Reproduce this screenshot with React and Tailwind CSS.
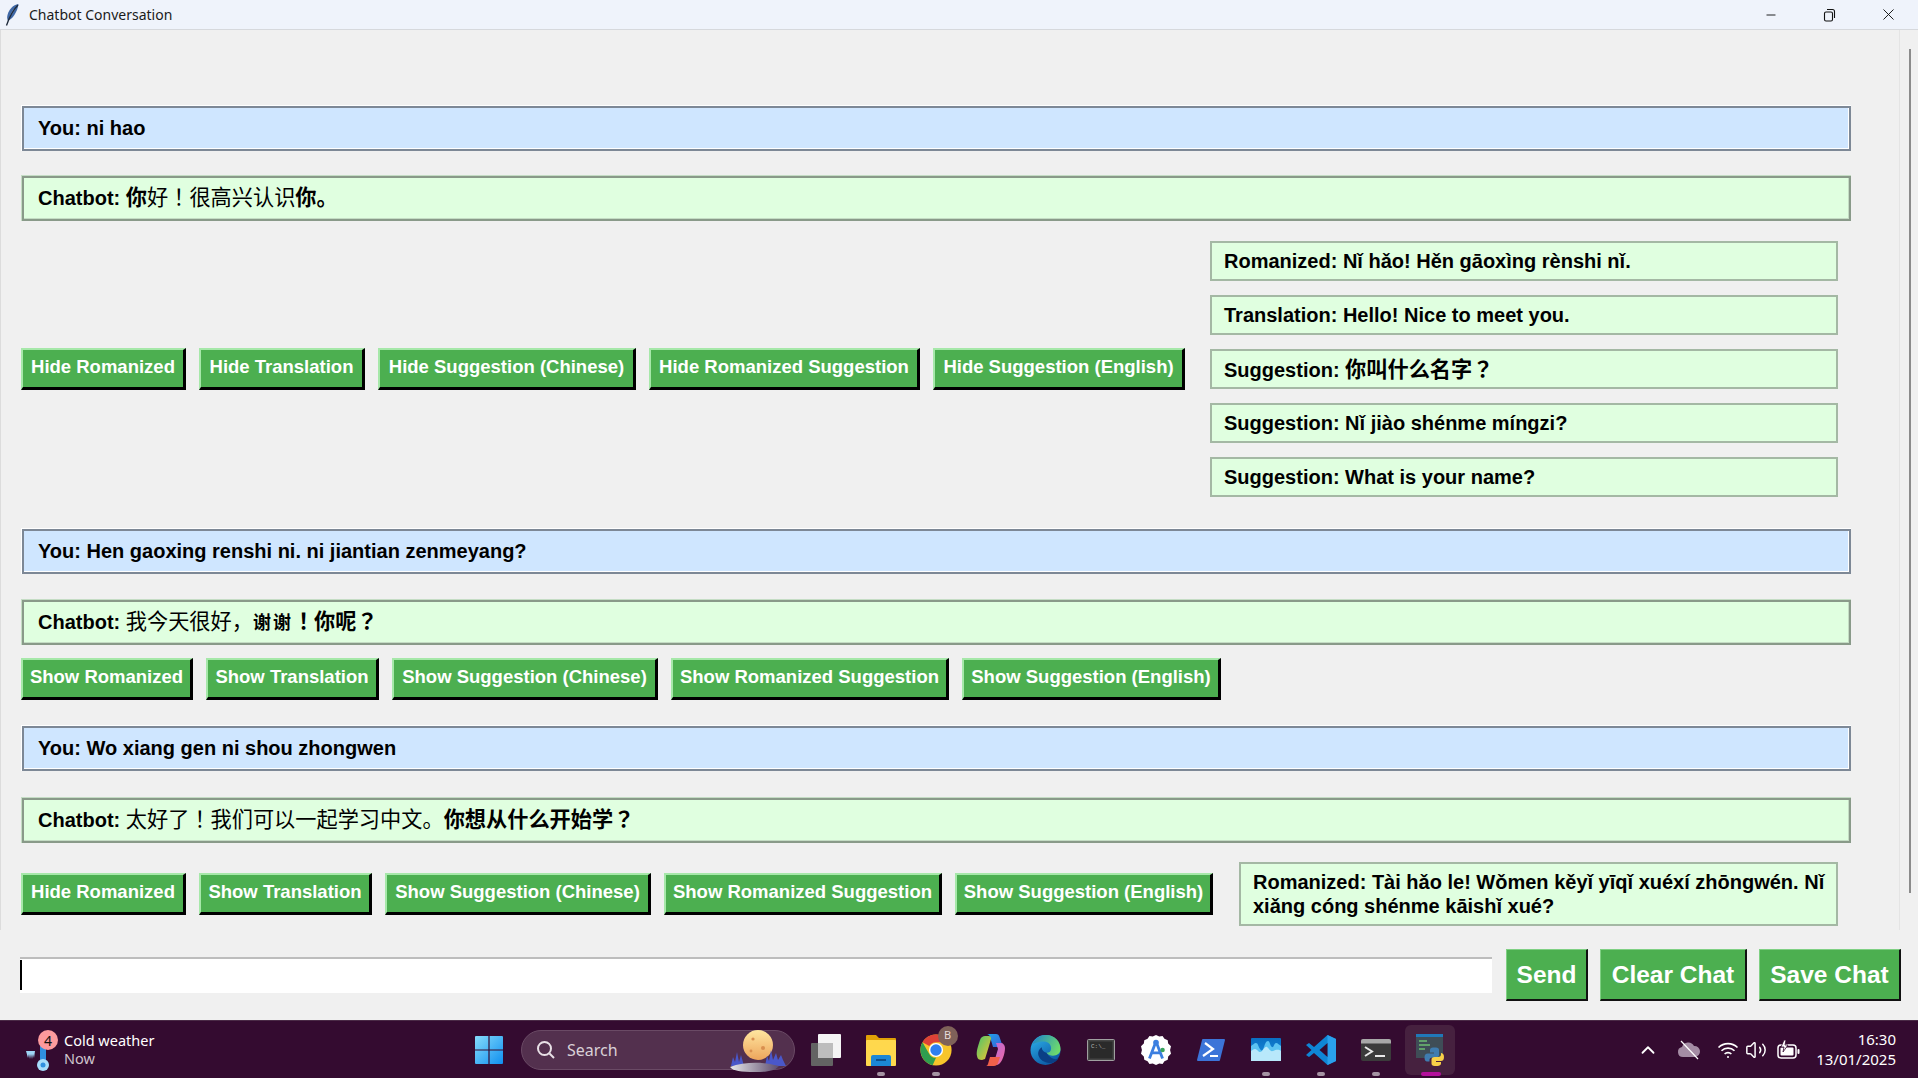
import React from 'react';
import { Minus, X, ChevronUp, Volume2 } from 'lucide-react';

const FONT = "font-['Liberation_Sans','Noto_Sans_CJK_SC',sans-serif]";

const Bubble = ({ kind, className = '', children }) => (
  <div
    className={`h-[46px] w-[1830px] flex items-center pl-[17px] text-[20px] leading-none font-bold text-black ${
      kind === 'you'
        ? 'bg-[#cfe6ff] shadow-[inset_1px_1px_0_#fff,inset_-2px_-2px_0_#7d8896,inset_3px_3px_0_#7d8896,inset_-3px_-3px_0_#fff]'
        : 'pb-[2px] bg-[#e0ffe0] shadow-[inset_1px_1px_0_#c4dcc4,inset_-2px_-2px_0_#899a89,inset_3px_3px_0_#899a89,inset_-3px_-3px_0_#c4dcc4]'
    } ${className}`}
  >
    {children}
  </div>
);

// chinese runs are a little larger than the latin text around them
const Zh = ({ thin, className = '', children }) => (
  <span className={`text-[21.2px] ${thin ? 'font-normal' : ''} ${className}`}>{children}</span>
);
const Punct = ({ children }) => (
  <span className="font-['Noto_Sans_CJK_TC',sans-serif]">{children}</span>
);

const ToggleButton = ({ label, width }) => (
  <button
    style={{ width }}
    className="h-[42px] shrink-0 pb-[2px] bg-[#4caf50] text-white font-bold text-[18.5px] leading-none border-t-2 border-l-2 border-r-[3px] border-b-[3px] border-t-[#a6e8a9] border-l-[#a6e8a9] border-r-black border-b-black"
  >
    {label}
  </button>
);

const ButtonRow = ({ buttons }) => (
  <div className="flex gap-[13px]">
    {buttons.map(([label, width]) => (
      <ToggleButton key={label} label={label} width={width} />
    ))}
  </div>
);

const InfoBox = ({ className = '', children }) => (
  <div className={`bg-[#e0ffe0] border-2 border-[#a4b8a4] flex items-center pl-[12px] pr-2 text-[20px] font-bold text-black ${className}`}>
    {children}
  </div>
);

const ActionButton = ({ label, width }) => (
  <button
    style={{ width }}
    className="h-[52px] shrink-0 pt-[2px] bg-[#4caf50] text-white font-bold text-[24.5px] leading-none border-t border-l border-r-2 border-b-2 border-t-[#7fd083] border-l-[#7fd083] border-r-[#111] border-b-[#111]"
  >
    {label}
  </button>
);

const Feather = () => (
  <svg width="16" height="24" viewBox="0 0 16 24">
    <path d="M14.5 1C9 2 5 6 3.5 12c-.6 2.4-.4 4 .3 5.5C8 17 13.5 9 14.5 1z" fill="#3f68a6" />
    <path d="M12 4C9 6.5 7 9 6 13c2-2 5-5 6-9z" fill="#7fa3d6" />
    <path d="M14 2C10 6 6 12 2.5 22.5" stroke="#1f2a3a" strokeWidth="1.3" fill="none" />
  </svg>
);

const RestoreIcon = () => (
  <svg width="14" height="14" viewBox="0 0 14 14" fill="none" stroke="#111" strokeWidth="1.1">
    <rect x="1.5" y="4" width="8" height="9" rx="1.5" />
    <path d="M4 1.5h5.5a2 2 0 0 1 2 2V10" />
  </svg>
);

const Weather = () => (
  <div className="relative w-[64px] h-full shrink-0">
    <svg className="absolute left-[25px] top-[17px]" width="26" height="34" viewBox="0 0 26 34">
      <path d="M1 13h9l-1 7-1-4-1 5-1-5-1 5-1-5-1 4z" fill="#9fd4f5" />
      <rect x="15" y="8" width="6" height="18" fill="#2f8fe0" />
      <circle cx="18" cy="27" r="6" fill="#a6dcfb" />
      <circle cx="18" cy="27" r="2.5" fill="#2f8fe0" />
    </svg>
    <div className="absolute left-[38px] top-[9px] w-[20px] h-[20px] rounded-full bg-[#fd9a9d] text-[#111] text-[14px] flex items-center justify-center font-['Noto_Sans']">
      4
    </div>
  </div>
);

const WinLogo = () => (
  <svg width="30" height="30" viewBox="0 0 30 30">
    <defs>
      <linearGradient id="win" x1="0" y1="0" x2="1" y2="1">
        <stop offset="0" stopColor="#86dcfb" />
        <stop offset="1" stopColor="#0f8ff0" />
      </linearGradient>
    </defs>
    <path d="M1 2a1 1 0 0 1 1-1h12.4v13.4H1zM15.6 1H28a1 1 0 0 1 1 1v12.4H15.6zM1 15.6h13.4V29H2a1 1 0 0 1-1-1zM15.6 15.6H29V28a1 1 0 0 1-1 1H15.6z" fill="url(#win)" />
  </svg>
);

const MoonScene = () => (
  <svg width="64" height="44" viewBox="0 0 64 44">
    <defs>
      <linearGradient id="moon" x1="0" y1="0" x2="0" y2="1">
        <stop offset="0" stopColor="#ffe6a0" />
        <stop offset="1" stopColor="#eda55c" />
      </linearGradient>
      <linearGradient id="snow" x1="0" y1="0" x2="1" y2="0">
        <stop offset="0" stopColor="#e8e8ea" />
        <stop offset="1" stopColor="#5b4a6b" />
      </linearGradient>
    </defs>
    <circle cx="29" cy="17" r="15" fill="url(#moon)" />
    <circle cx="24" cy="11" r="1.6" fill="#d98f4f" />
    <circle cx="34" cy="20" r="2" fill="#d98f4f" />
    <circle cx="22" cy="23" r="1.4" fill="#d98f4f" />
    <path d="M2 38l2-9 2 5 2-10 2 10 2-7 3 11zM36 38l2-10 2 5 2-11 2 10 3-7 2 7 3-5 2 5 3 6z" fill="#4a57c9" />
    <path d="M1 39c12-5 30-5 40-3l9 2c-4 5-12 6-24 6C12 44 4 43 1 39z" fill="url(#snow)" />
  </svg>
);

const TaskView = () => (
  <svg width="32" height="34" viewBox="0 0 32 34">
    <rect x="1" y="10" width="22" height="23" rx="1" fill="#636363" />
    <rect x="8" y="1" width="23" height="24" rx="1" fill="#f4f4f4" />
    <rect x="8" y="10" width="15" height="15" fill="#bdbdbd" />
  </svg>
);

const Folder = () => (
  <svg width="32" height="34" viewBox="0 0 32 34">
    <path d="M1 3a1 1 0 0 1 1-1h9l3 3h16a1 1 0 0 1 1 1v4H1z" fill="#e0a106" />
    <rect x="1" y="7" width="30" height="26" rx="1" fill="#ffd84d" />
    <path d="M6 33v-9a2 2 0 0 1 2-2h16a2 2 0 0 1 2 2v9z" fill="#1b87d6" />
    <rect x="11" y="26" width="10" height="2" fill="#0d4f8c" />
  </svg>
);

const Chrome = () => (
  <svg width="34" height="34" viewBox="0 0 24 24">
    <circle cx="12" cy="12" r="11" fill="#f7c52b" />
    <path d="M12 1a11 11 0 0 1 9.53 5.5H12a5.5 5.5 0 0 0-4.76 2.75L2.47 6.5A11 11 0 0 1 12 1z" fill="#dd4137" />
    <path d="M2.47 6.5l4.77 8.25A5.5 5.5 0 0 0 12 17.5l-2.4 5.2A11 11 0 0 1 2.47 6.5z" fill="#2f9e4f" />
    <circle cx="12" cy="12" r="5" fill="#fff" />
    <circle cx="12" cy="12" r="4" fill="#2f7ff0" />
  </svg>
);

const Copilot = () => (
  <svg width="30" height="34" viewBox="0 0 30 34">
    <defs>
      <linearGradient id="cpA" x1="0" y1="0" x2="1" y2="1">
        <stop offset="0" stopColor="#1fa2e8" />
        <stop offset="1" stopColor="#3b5fd9" />
      </linearGradient>
      <linearGradient id="cpB" x1="0" y1="0" x2="1" y2="1">
        <stop offset="0" stopColor="#b26ae0" />
        <stop offset="1" stopColor="#f06aa0" />
      </linearGradient>
      <linearGradient id="cpC" x1="0" y1="0" x2="1" y2="1">
        <stop offset="0" stopColor="#49c46a" />
        <stop offset="1" stopColor="#f5c431" />
      </linearGradient>
    </defs>
    <path d="M11 1h9c2 0 3 1 3.5 3L27 14H17L14 4c-.5-2-2-3-3-3z" fill="url(#cpA)" />
    <path d="M20 10h5c2 0 4 2 4 5 0 6-3 14-6 16-1 1-3 1-5 1h-4c3-1 4-3 5-6l3-10z" fill="url(#cpB)" />
    <path d="M9 3c-2 0-4 1-5 4-2 6-4 12-3 16 .5 3 2 4 5 4l3-1 4-13 2-7c.5-2-1-3-2-3z" fill="url(#cpC)" />
    <path d="M10 33h8c2 0 3-1 4-3l2-6H14l-2 7c-.4 1-1 2-2 2z" fill="#f0604a" />
  </svg>
);

const Edge = () => (
  <svg width="31" height="30" viewBox="0 0 32 32">
    <defs>
      <linearGradient id="edgeA" x1="0" y1="0" x2="0.6" y2="1">
        <stop offset="0" stopColor="#2fb6ee" />
        <stop offset="1" stopColor="#0c59a4" />
      </linearGradient>
      <linearGradient id="edgeB" x1="0" y1="0.2" x2="1" y2="0.6">
        <stop offset="0" stopColor="#1f86c8" />
        <stop offset="1" stopColor="#6fdc6a" />
      </linearGradient>
    </defs>
    <circle cx="16" cy="16" r="16" fill="url(#edgeA)" />
    <path d="M2 10C5 3 11 0 17 0c9 0 15 7 15 15 0 5-4 7-8 7-3 0-6-1-7-3 3 0 5-2 5-5 0-5-5-8-10-7-4 .8-8 2-10 3z" fill="url(#edgeB)" />
    <path d="M17 19c-3-1-5-3-5-6-3 2-5 6-3 10 2 5 8 7 13 7 3-.6 6-2 8-5-4 2-9 0-13-6z" fill="#0a3f86" />
  </svg>
);

const CmdIcon = () => (
  <svg width="28" height="22" viewBox="0 0 28 22">
    <rect x="0.5" y="0.5" width="27" height="21" rx="1" fill="#454545" stroke="#a0a0a0" />
    <rect x="2.5" y="2.5" width="23" height="17" fill="#2a2a2a" />
    <text x="4" y="9" fontSize="6" fill="#b5b5b5" fontFamily="Liberation Mono">C:\_</text>
  </svg>
);

const AndroidStudio = () => (
  <svg width="30" height="30" viewBox="0 0 32 32">
    <path d="M16 0l3.5 1.5L23 1l2 3 3.5 1.5L29 9l3 3-1 4 1 4-3 3-.5 3.5L25 28l-2 3-3.5-.5L16 32l-3.5-1.5L9 31l-2-3-3.5-1.5L3 23l-3-3 1-4-1-4 3-3 .5-3.5L7 4l2-3 3.5.5z" fill="#fff" />
    <path d="M16 7l-7 18M16 7l7 18M10.5 19h11" stroke="#3c7fe0" strokeWidth="3" fill="none" />
    <circle cx="16" cy="8" r="3" fill="#3c7fe0" />
    <circle cx="23" cy="16" r="2.4" fill="#3ba55d" />
  </svg>
);

const PowerShell = () => (
  <svg width="28" height="22" viewBox="0 0 28 22">
    <path d="M6 0h21a1 1 0 0 1 1 1l-5 20a1 1 0 0 1-1 1H1a1 1 0 0 1-1-1L5 1a1 1 0 0 1 1-1z" fill="#3c74d8" />
    <path d="M8 4l8 6-10 7" stroke="#fff" strokeWidth="2.2" fill="none" />
    <rect x="13" y="16" width="8" height="2" fill="#fff" />
  </svg>
);

const TaskChart = () => (
  <svg width="30" height="23" viewBox="0 0 30 23">
    <defs>
      <linearGradient id="tmBack" x1="0" y1="0" x2="0" y2="1">
        <stop offset="0" stopColor="#0a6fc2" />
        <stop offset="1" stopColor="#1c8fde" />
      </linearGradient>
    </defs>
    <rect width="30" height="23" rx="1" fill="url(#tmBack)" />
    <path d="M0 8c2-1 3-3 5-3s2 3 4 6 3 1 4-2 2-6 4-6 2 5 4 6 2-4 4-4 3 2 5 3v15H0z" fill="#5cc3f2" />
    <path d="M0 13c3-2 4-3 6-1s3 3 5 1 3-5 5-4 3 5 6 4 5-2 8 0v10H0z" fill="#b8e8fb" />
  </svg>
);

const VsCode = () => (
  <svg width="30" height="30" viewBox="0 0 30 30">
    <path d="M21.5 0L30 4v22l-8.5 4L8 18l-5 4-3-2 5.5-5L0 10l3-2 5 4z" fill="#0f86d6" />
    <path d="M21.5 0L30 4v22l-8.5 4z" fill="#2aa0ec" />
    <path d="M21.5 8l-8 7 8 7z" fill="#340b30" />
  </svg>
);

const TerminalIcon = () => (
  <svg width="30" height="22" viewBox="0 0 30 22">
    <rect width="30" height="22" rx="2" fill="#3b3b3b" />
    <path d="M0 2a2 2 0 0 1 2-2h26a2 2 0 0 1 2 2v2.5H0z" fill="#a8a8a8" />
    <path d="M4 8l7 4.5L4 17" stroke="#e8e8e8" strokeWidth="2" fill="none" />
    <rect x="14" y="16" width="10" height="2" fill="#e8e8e8" />
  </svg>
);

const PythonIdle = () => (
  <svg width="30" height="32" viewBox="0 0 30 32">
    <rect x="0" y="0" width="27" height="24" fill="#3f4d57" />
    <rect x="0" y="0" width="27" height="3" fill="#2078b8" />
    <path d="M3 7h8M3 11h11M3 15h6" stroke="#6fbf73" strokeWidth="1.3" />
    <path d="M14 16c0-1.5 1-2.5 3-2.5h3c2 0 3 1 3 2.5v5c0 1.5-1 2.5-3 2.5h-4c-1.5 0-2.5 1-2.5 2.5v1.5H11c-1.5 0-2.5-1.5-2.5-4s1-4 3.5-4h6v-1h-4z" fill="#3f7cb0" />
    <path d="M25 19c1.5 0 3 1 3 4s-1.5 4-3 4h-5v1h5v1.5c0 1.5-1.5 2.5-3.5 2.5h-3c-2 0-3-1-3-2.5v-4c0-1.5 1-2.5 3-2.5h4c1.5 0 2.5-1 2.5-2.5z" fill="#f7d048" />
  </svg>
);

const Wifi = () => (
  <svg width="22" height="18" viewBox="0 0 22 18" fill="none" stroke="#fff" strokeWidth="1.6">
    <path d="M1.5 6.5a13.5 13.5 0 0 1 19 0" />
    <path d="M4.5 9.8a9.2 9.2 0 0 1 13 0" />
    <path d="M7.6 13a4.8 4.8 0 0 1 6.8 0" />
    <circle cx="11" cy="16" r="1" fill="#fff" stroke="none" />
  </svg>
);

const CloudOff = () => (
  <svg width="24" height="20" viewBox="0 0 24 20">
    <path d="M6 17a5 5 0 0 1-1-9.9A6.5 6.5 0 0 1 17 6a5.5 5.5 0 0 1 1 11z" fill="#a48ca4" />
    <path d="M4 1l17 18" stroke="#fff" strokeWidth="1.2" />
  </svg>
);

const Battery = () => (
  <svg width="24" height="20" viewBox="0 0 24 20" fill="none">
    <rect x="1" y="5" width="18" height="13" rx="3" stroke="#fff" strokeWidth="1.5" />
    <rect x="3.5" y="7.5" width="13" height="8" rx="1" fill="#fff" />
    <rect x="20.5" y="9" width="2" height="5" rx="1" fill="#fff" />
    <path d="M7 0L4 7h3l-1 5 5-7H8l1-5z" fill="#fff" stroke="#340b30" strokeWidth="0.8" />
  </svg>
);

const TaskIcon = ({ dot, active, children }) => (
  <div className="relative w-[55px] h-[50px] shrink-0 flex items-center justify-center">
    {active && <span className="absolute left-[2px] top-0 w-[50px] h-[50px] rounded-md bg-[#46213f]" />}
    <div className="relative flex">{children}</div>
    {dot && <span className="absolute bottom-[-1px] w-[8px] h-[4px] rounded-full bg-[#a593a3]" />}
    {active && <span className="absolute bottom-[-1px] w-[20px] h-[4px] rounded-full bg-[#b30f9b]" />}
  </div>
);

const row1 = [['Hide Romanized', 165], ['Hide Translation', 166], ['Hide Suggestion (Chinese)', 258], ['Hide Romanized Suggestion', 271], ['Hide Suggestion (English)', 252]];
const row2 = [['Show Romanized', 172], ['Show Translation', 173], ['Show Suggestion (Chinese)', 266], ['Show Romanized Suggestion', 278], ['Show Suggestion (English)', 259]];
const row3 = [['Hide Romanized', 165], ['Show Translation', 173], ['Show Suggestion (Chinese)', 266], ['Show Romanized Suggestion', 278], ['Show Suggestion (English)', 258]];

export default function App() {
  return (
    <div className={`w-[1918px] h-[1078px] flex flex-col overflow-hidden bg-[#f0f0f0] ${FONT}`}>
      {/* title bar */}
      <div className="h-[30px] shrink-0 flex items-center bg-[#eff3fb] border-b border-[#d6d8dc] font-['Noto_Sans'] text-[14px] text-[#1a1a1a]">
        <div className="ml-[4px] w-[24px] flex"><Feather /></div>
        <span className="ml-[1px]">Chatbot Conversation</span>
        <div className="ml-auto flex items-center">
          <div className="w-[58px] flex justify-center"><Minus size={14} strokeWidth={1.6} color="#111" /></div>
          <div className="w-[59px] flex justify-center"><RestoreIcon /></div>
          <div className="w-[59px] flex justify-center pr-[1px]"><X size={19} strokeWidth={1.2} color="#111" /></div>
        </div>
      </div>

      {/* chat */}
      <div className="h-[900px] shrink-0 flex border-l border-[#dcdcdc]">
        <div className="w-[1898px] pl-[20px] pt-[75px]">
          <Bubble kind="you">You: ni hao</Bubble>
          <Bubble kind="bot" className="mt-[24px]">
            <span>Chatbot: <Zh>你<span className="font-normal">好<Punct>！</Punct>很高兴认识</span>你。</Zh></span>
          </Bubble>
          <div className="w-[1830px] mt-[20px] flex items-center justify-between pr-[13px]">
            <ButtonRow buttons={row1} />
            <div className="w-[628px] flex flex-col gap-[14px]">
              <InfoBox className="h-[40px]">Romanized: Nǐ hǎo! Hěn gāoxìng rènshi nǐ.</InfoBox>
              <InfoBox className="h-[40px]">Translation: Hello! Nice to meet you.</InfoBox>
              <InfoBox className="h-[40px]"><span>Suggestion: <Zh>你叫什么名字<Punct>？</Punct></Zh></span></InfoBox>
              <InfoBox className="h-[40px]">Suggestion: Nǐ jiào shénme míngzi?</InfoBox>
              <InfoBox className="h-[40px]">Suggestion: What is your name?</InfoBox>
            </div>
          </div>
          <Bubble kind="you" className="mt-[31px]">You: Hen gaoxing renshi ni. ni jiantian zenmeyang?</Bubble>
          <Bubble kind="bot" className="mt-[25px]">
            <span>Chatbot: <Zh thin>我今天很好，</Zh><span className="text-[18px] tracking-[2px]">谢谢</span><Zh><Punct>！</Punct>你呢<Punct>？</Punct></Zh></span>
          </Bubble>
          <div className="mt-[13px]"><ButtonRow buttons={row2} /></div>
          <Bubble kind="you" className="mt-[25px]">You: Wo xiang gen ni shou zhongwen</Bubble>
          <Bubble kind="bot" className="mt-[26px]">
            <span>Chatbot: <Zh thin>太好了<Punct>！</Punct>我们可以一起学习中文。</Zh><Zh>你想从什么开始学<Punct>？</Punct></Zh></span>
          </Bubble>
          <div className="w-[1830px] mt-[19px] flex items-center justify-between pr-[13px]">
            <ButtonRow buttons={row3} />
            <InfoBox className="w-[599px] h-[64px] leading-[24px]">
              Romanized: Tài hǎo le! Wǒmen kěyǐ yīqǐ xuéxí zhōngwén. Nǐ xiǎng cóng shénme kāishǐ xué?
            </InfoBox>
          </div>
        </div>
        <div className="w-[19px] border-l border-[#e4e4e4] pt-[19px] pl-[9px]">
          <div className="w-[2px] h-[844px] bg-[#8b8b8b]" />
        </div>
      </div>

      {/* input row */}
      <div className="mt-[19px] flex items-center pl-[20px]">
        <div className="w-[1472px] h-[36px] bg-white border-t-2 border-[#bdbdbd] flex">
          <div className="w-[2px] h-[30px] mt-[1px] bg-black" />
        </div>
        <div className="ml-[14px] flex gap-[12px]">
          <ActionButton label="Send" width={82} />
          <ActionButton label="Clear Chat" width={147} />
          <ActionButton label="Save Chat" width={142} />
        </div>
      </div>

      {/* taskbar */}
      <div className="mt-auto h-[58px] shrink-0 flex items-center bg-[#340b30] border-t border-[#4a2a46] text-white font-['Noto_Sans']">
        <Weather />
        <div className="w-[100px] flex flex-col leading-[18px] mt-[-2px]">
          <span className="text-[14.5px]">Cold weather</span>
          <span className="text-[14.5px] text-[#cfc4cd]">Now</span>
        </div>
        <div className="ml-[310px] w-[30px] flex"><WinLogo /></div>
        <div className="ml-[17px] w-[274px] h-[40px] rounded-full bg-[#53304e] border border-[#6a4a65] flex items-center pl-[14px] shrink-0">
          <svg width="20" height="20" viewBox="0 0 20 20" fill="none" stroke="#e8e0e6" strokeWidth="2">
            <circle cx="8.5" cy="8.5" r="6.5" />
            <path d="M13.5 13.5L18 18" />
          </svg>
          <span className="ml-[11px] text-[16px] text-[#d9d0d7]">Search</span>
          <div className="ml-auto mr-[1px] flex"><MoonScene /></div>
        </div>
        <div className="ml-[3px] flex items-center">
          <TaskIcon><TaskView /></TaskIcon>
          <TaskIcon dot><Folder /></TaskIcon>
          <TaskIcon dot>
            <Chrome />
            <span className="absolute left-[19px] top-[-7px] w-[20px] h-[20px] rounded-full bg-[#7f6259] text-[11px] text-[#e6dcd8] flex items-center justify-center">B</span>
          </TaskIcon>
          <TaskIcon><Copilot /></TaskIcon>
          <TaskIcon><Edge /></TaskIcon>
          <TaskIcon><CmdIcon /></TaskIcon>
          <TaskIcon><AndroidStudio /></TaskIcon>
          <TaskIcon><PowerShell /></TaskIcon>
          <TaskIcon dot><TaskChart /></TaskIcon>
          <TaskIcon dot><VsCode /></TaskIcon>
          <TaskIcon dot><TerminalIcon /></TaskIcon>
          <TaskIcon active><PythonIdle /></TaskIcon>
        </div>
        <div className="ml-[179px] flex items-center gap-[18px]">
          <ChevronUp size={22} strokeWidth={2} />
          <CloudOff />
          <div className="flex items-center gap-[6px] ml-[-2px]">
            <Wifi />
            <Volume2 size={22} strokeWidth={1.6} />
            <div className="ml-[4px] flex"><Battery /></div>
          </div>
        </div>
        <div className="ml-auto pr-[22px] pb-[2px] flex flex-col items-end text-[15px] leading-[20px]">
          <span>16:30</span>
          <span>13/01/2025</span>
        </div>
      </div>
    </div>
  );
}
